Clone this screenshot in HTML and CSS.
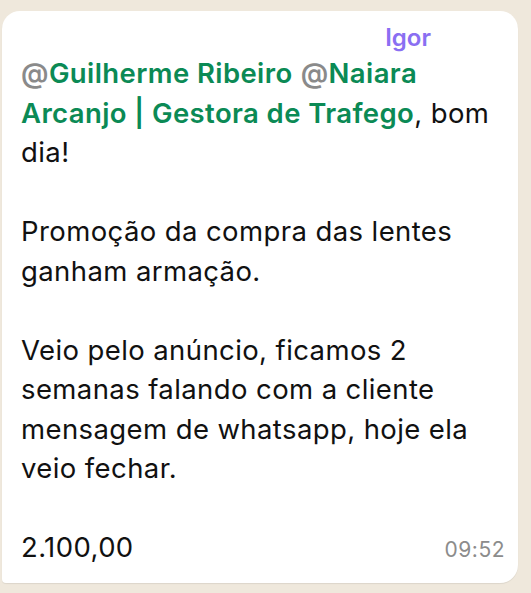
FILE: index.html
```html
<!DOCTYPE html>
<html lang="pt">
<head>
  <meta charset="UTF-8" />
  <title>Mensagem</title>
  <link rel="stylesheet" href="styles.css">
</head>
<body>
  <div class="chat">
    <div class="bubble">
      <div class="sender">Igor</div>
      <div class="text">
        <p><span class="at">@</span><span class="mention">Guilherme Ribeiro</span> <span class="at">@</span><span class="mention">Naiara Arcanjo | Gestora de Trafego</span>, bom dia!</p>
        <p>Promoção da compra das lentes ganham armação.</p>
        <p>Veio pelo anúncio, ficamos 2 semanas falando com a cliente mensagem de whatsapp, hoje ela veio fechar.</p>
        <div class="last">
          <span>2.100,00</span>
          <span class="time">09:52</span>
        </div>
      </div>
    </div>
  </div>
</body>
</html>
```
FILE: styles.css
```css
body {
  margin: 0;
  background-color: #efe8dc;
  font-family: Inter, "Noto Sans", sans-serif;
  color: #111;
}
.chat {
  padding: 11px 13px 10px 2px;
}
.bubble {
  background: #fff;
  border-radius: 18px 18px 18px 4px;
  padding: 10px 13px 13px 19px;
  box-shadow: 0 1px 1px rgba(0,0,0,0.08);
}
.sender {
  text-align: right;
  padding-right: 74px;
  color: #8a6ff2;
  font-weight: 600;
  font-size: 24px;
  line-height: 33px;
}
.text {
  font-size: 27.5px;
  line-height: 39.5px;
  letter-spacing: 0.4px;
}
.text p {
  margin: 0 0 39.5px;
}
.mention {
  color: #0b8a55;
  font-weight: 600;
}
.at {
  color: #8a8a8a;
  font-weight: 600;
}
.last {
  display: flex;
  justify-content: space-between;
  align-items: baseline;
}
.time {
  font-size: 21px;
  letter-spacing: 0.5px;
  color: #8c8c8c;
}
```
